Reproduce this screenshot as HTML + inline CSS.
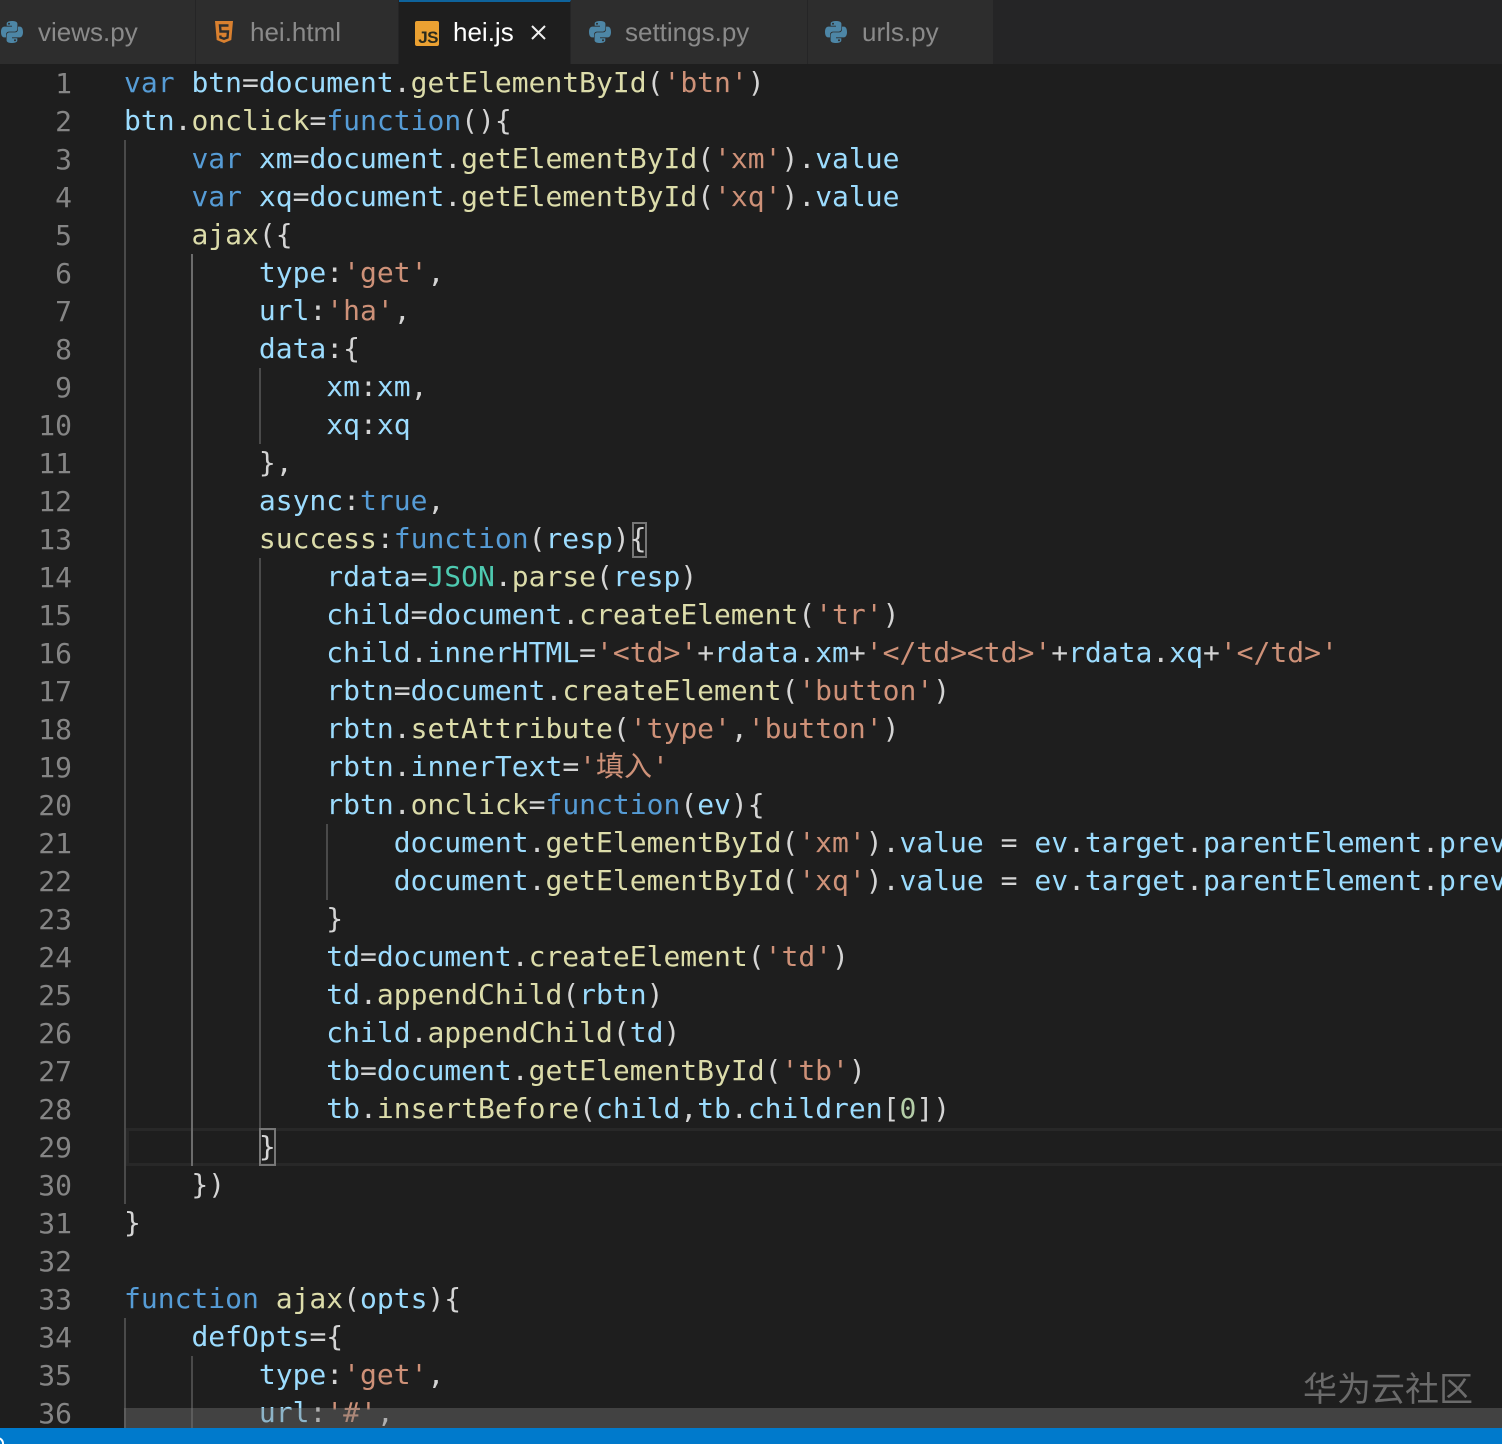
<!DOCTYPE html>
<html><head><meta charset="utf-8">
<style>
html,body{margin:0;padding:0;background:#1e1e1e}
#w{position:relative;width:1502px;height:1444px;overflow:hidden;background:#1e1e1e}
.tabs{position:absolute;left:0;top:0;width:1502px;height:64px;background:#252526}
.tab{position:absolute;top:0;height:64px;background:#2d2d2d;border-right:1px solid #252526;box-sizing:border-box;font:26px/64px "Liberation Sans",sans-serif;color:#8a8a8a;white-space:nowrap}
.tab span.l{position:absolute;top:0}
.py{position:absolute;top:20px;width:24px;height:24px}
#code,#nums{position:absolute;font:28px/38px "DejaVu Sans Mono","Noto Sans CJK SC",monospace;white-space:pre}
#nums{left:0;top:65px;width:72px;text-align:right;color:#858585;height:1363px;overflow:hidden}
#code{left:124px;top:64px;color:#d4d4d4;width:1378px;overflow:hidden;height:1364px}
.k{color:#569cd6}.v{color:#9cdcfe}.f{color:#dcdcaa}.s{color:#ce9178}.t{color:#4ec9b0}.n{color:#b5cea8}
.g{position:absolute;width:2px;background:#4a4a4a}
.g2{background:#6c6c6c}
</style></head><body><div id="w">
<div class="tabs">
<div class="tab" style="left:0;width:196px"><svg class="py" style="left:0" viewBox="0 0 24 24"><use href="#pyi"/></svg><span class="l" style="left:38px">views.py</span></div>
<div class="tab" style="left:196px;width:203px"><svg style="position:absolute;left:18px;top:20px" width="20" height="24" viewBox="0 0 20 24"><path fill="#d9802f" d="M1 1h18l-1.700 19L10 23l-7.300-3z"/><path fill="none" stroke="#2d2d2d" stroke-width="2.400" d="M14.500 5.500H6l.5 6h7.500l-.5 6-3.500 1.200-3.500-1.200-.2-2"/></svg><span class="l" style="left:54px">hei.html</span></div>
<div class="tab" style="left:399px;width:172px;background:#1e1e1e;color:#fff;border-top:2px solid #0e639c;border-right:1px solid #252526"><div style="position:absolute;left:16px;top:19px;width:24px;height:25px;background:#eba132;border-radius:2px"><span style="position:absolute;right:1px;bottom:0;font:bold 17px/17px 'Liberation Sans',sans-serif;letter-spacing:-.5px;color:#2a2a1c">JS</span></div><span class="l" style="left:54px;top:-2px">hei.js</span><svg style="position:absolute;left:131px;top:22px" width="17" height="17" viewBox="0 0 17 17"><path d="M2 2l13 13M15 2L2 15" stroke="#f0f0f0" stroke-width="2" fill="none"/></svg></div>
<div class="tab" style="left:571px;width:237px"><svg class="py" style="left:17px" viewBox="0 0 24 24"><use href="#pyi"/></svg><span class="l" style="left:54px">settings.py</span></div>
<div class="tab" style="left:808px;width:186px"><svg class="py" style="left:16px" viewBox="0 0 24 24"><use href="#pyi"/></svg><span class="l" style="left:54px">urls.py</span></div>
</div>
<svg width="0" height="0" style="position:absolute"><defs><g id="pyi"><path fill="#4d86a6" fill-rule="evenodd" d="M11.900 1C6.900 1 6.700 3.200 6.700 3.200v2.600H12v.8H4.600S1 6.200 1 11.900s3.100 5.500 3.100 5.500H6v-2.600s-.1-3.200 3.100-3.200h5.300s3 0 3-2.900V3.900S17.900 1 11.900 1zM9 2.700a1 1 0 1 1 0 2 1 1 0 0 1 0-2z"/><path fill="#4d86a6" fill-rule="evenodd" transform="rotate(180 12 12)" d="M11.900 1C6.900 1 6.700 3.200 6.700 3.200v2.600H12v.8H4.600S1 6.200 1 11.900s3.100 5.500 3.100 5.500H6v-2.600s-.1-3.200 3.100-3.200h5.300s3 0 3-2.900V3.900S17.900 1 11.900 1zM9 2.700a1 1 0 1 1 0 2 1 1 0 0 1 0-2z"/></g></defs></svg>

<div style="position:absolute;left:126px;top:1128px;width:1376px;height:38px;box-sizing:border-box;border:3px solid #282828;border-right:0"></div>
<div class="g" style="left:124px;top:140px;height:1064px"></div>
<div class="g g2" style="left:191px;top:254px;height:912px"></div>
<div class="g" style="left:259px;top:368px;height:76px"></div>
<div class="g" style="left:259px;top:558px;height:570px"></div>
<div class="g" style="left:326px;top:824px;height:76px"></div>
<div class="g" style="left:124px;top:1318px;height:110px"></div>
<div class="g" style="left:191px;top:1356px;height:72px"></div>
<div style="position:absolute;left:632px;top:522px;width:15px;height:36px;box-sizing:border-box;border:2px solid #777"></div>
<div style="position:absolute;left:259px;top:1128px;width:17px;height:38px;box-sizing:border-box;border:2px solid #777"></div>

<div id="nums">1
2
3
4
5
6
7
8
9
10
11
12
13
14
15
16
17
18
19
20
21
22
23
24
25
26
27
28
29
30
31
32
33
34
35
36</div>
<div id="code"><span class="k">var</span> <span class="v">btn</span>=<span class="v">document</span>.<span class="f">getElementById</span>(<span class="s">'btn'</span>)
<span class="v">btn</span>.<span class="f">onclick</span>=<span class="k">function</span>(){
    <span class="k">var</span> <span class="v">xm</span>=<span class="v">document</span>.<span class="f">getElementById</span>(<span class="s">'xm'</span>).<span class="v">value</span>
    <span class="k">var</span> <span class="v">xq</span>=<span class="v">document</span>.<span class="f">getElementById</span>(<span class="s">'xq'</span>).<span class="v">value</span>
    <span class="f">ajax</span>({
        <span class="v">type</span>:<span class="s">'get'</span>,
        <span class="v">url</span>:<span class="s">'ha'</span>,
        <span class="v">data</span>:{
            <span class="v">xm</span>:<span class="v">xm</span>,
            <span class="v">xq</span>:<span class="v">xq</span>
        },
        <span class="v">async</span>:<span class="k">true</span>,
        <span class="f">success</span>:<span class="k">function</span>(<span class="v">resp</span>){
            <span class="v">rdata</span>=<span class="t">JSON</span>.<span class="f">parse</span>(<span class="v">resp</span>)
            <span class="v">child</span>=<span class="v">document</span>.<span class="f">createElement</span>(<span class="s">'tr'</span>)
            <span class="v">child</span>.<span class="v">innerHTML</span>=<span class="s">'&lt;td&gt;'</span>+<span class="v">rdata</span>.<span class="v">xm</span>+<span class="s">'&lt;/td&gt;&lt;td&gt;'</span>+<span class="v">rdata</span>.<span class="v">xq</span>+<span class="s">'&lt;/td&gt;'</span>
            <span class="v">rbtn</span>=<span class="v">document</span>.<span class="f">createElement</span>(<span class="s">'button'</span>)
            <span class="v">rbtn</span>.<span class="f">setAttribute</span>(<span class="s">'type'</span>,<span class="s">'button'</span>)
            <span class="v">rbtn</span>.<span class="v">innerText</span>=<span class="s">'填入'</span>
            <span class="v">rbtn</span>.<span class="f">onclick</span>=<span class="k">function</span>(<span class="v">ev</span>){
                <span class="v">document</span>.<span class="f">getElementById</span>(<span class="s">'xm'</span>).<span class="v">value</span> = <span class="v">ev</span>.<span class="v">target</span>.<span class="v">parentElement</span>.<span class="v">previousElementSibling</span>
                <span class="v">document</span>.<span class="f">getElementById</span>(<span class="s">'xq'</span>).<span class="v">value</span> = <span class="v">ev</span>.<span class="v">target</span>.<span class="v">parentElement</span>.<span class="v">previousElementSibling</span>
            }
            <span class="v">td</span>=<span class="v">document</span>.<span class="f">createElement</span>(<span class="s">'td'</span>)
            <span class="v">td</span>.<span class="f">appendChild</span>(<span class="v">rbtn</span>)
            <span class="v">child</span>.<span class="f">appendChild</span>(<span class="v">td</span>)
            <span class="v">tb</span>=<span class="v">document</span>.<span class="f">getElementById</span>(<span class="s">'tb'</span>)
            <span class="v">tb</span>.<span class="f">insertBefore</span>(<span class="v">child</span>,<span class="v">tb</span>.<span class="v">children</span>[<span class="n">0</span>])
        }
    })
}

<span class="k">function</span> <span class="f">ajax</span>(<span class="v">opts</span>){
    <span class="v">defOpts</span>={
        <span class="v">type</span>:<span class="s">'get'</span>,
        <span class="v">url</span>:<span class="s">'#'</span>,</div>

<div style="position:absolute;left:124px;top:1408px;width:1378px;height:20px;background:rgba(121,121,121,.4)"></div>
<div style="position:absolute;left:1303px;top:1362px;font:34px/50px 'Noto Sans CJK SC',sans-serif;color:#6b6b6b;white-space:nowrap">华为云社区</div>
<div style="position:absolute;left:0;top:1428px;width:1502px;height:16px;background:#007acc;overflow:hidden"><div style="position:absolute;left:-9px;top:9px;width:9px;height:9px;border:2px solid #fff;border-radius:50%"></div></div>
</div></body></html>
